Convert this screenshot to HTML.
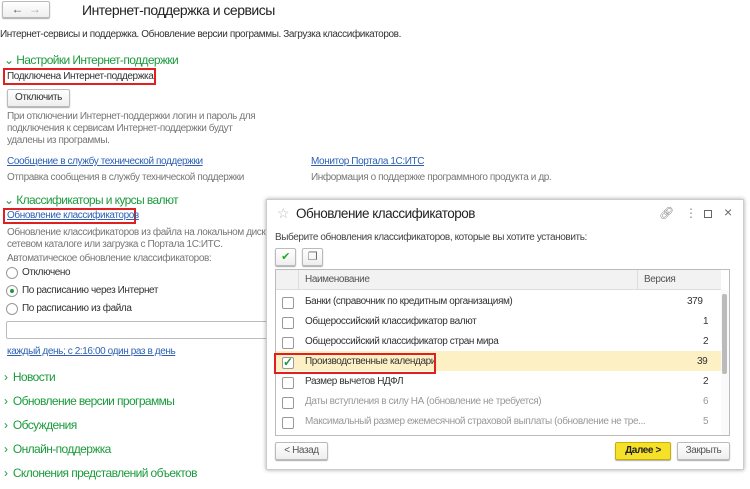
<!DOCTYPE html>
<html><head><meta charset="utf-8"><style>
*{margin:0;padding:0;box-sizing:border-box}
body{width:750px;height:489px;overflow:hidden;background:#fff;font-family:"Liberation Sans",sans-serif;font-size:10px;letter-spacing:-0.4px;color:#333;position:relative}
.a{position:absolute;white-space:nowrap}
.g{color:#777}
.sec{color:#1a9b3c;font-size:12px;letter-spacing:-0.6px}
.lnk{color:#2d5fb5;text-decoration:underline}
.red{border:2px solid #e02020}
.btn{border:1px solid #bbb;border-radius:2px;background:linear-gradient(#fff,#eee);box-shadow:0 1px 1px #aaa;text-align:center}
.rad{width:12px;height:12px;border:1px solid #999;border-radius:50%;background:#fff}
.cb{width:12px;height:12px;border:1px solid #999;background:#fff;border-radius:2px}
</style></head><body>
<div class="a btn" style="left:2px;top:1px;width:48px;height:17px;font-size:12px;line-height:15px;color:#555">←&nbsp;&nbsp;<span style="color:#aaa">→</span></div>
<div class="a" style="left:82px;top:2px;font-size:14px;letter-spacing:-0.5px;color:#222">Интернет-поддержка и сервисы</div>
<div class="a" style="left:0;top:29px">Интернет-сервисы и поддержка. Обновление версии программы. Загрузка классификаторов.</div>
<div class="a sec" style="left:4px;top:53px">⌄&nbsp;Настройки Интернет-поддержки</div>
<div class="a red" style="left:3px;top:68px;width:153px;height:17px"></div>
<div class="a" style="left:7px;top:71px">Подключена Интернет-поддержка</div>
<div class="a btn" style="left:7px;top:89px;width:63px;height:18px;line-height:16px">Отключить</div>
<div class="a g" style="left:7px;top:111px;line-height:12px">При отключении Интернет-поддержки логин и пароль для<br>подключения к сервисам Интернет-поддержки будут<br>удалены из программы.</div>
<div class="a lnk" style="left:7px;top:156px">Сообщение в службу технической поддержки</div>
<div class="a lnk" style="left:311px;top:156px">Монитор Портала 1С:ИТС</div>
<div class="a g" style="left:7px;top:172px">Отправка сообщения в службу технической поддержки</div>
<div class="a g" style="left:311px;top:172px">Информация о поддержке программного продукта и др.</div>
<div class="a sec" style="left:4px;top:193px">⌄&nbsp;Классификаторы и курсы валют</div>
<div class="a red" style="left:3px;top:208px;width:133px;height:16px"></div>
<div class="a lnk" style="left:7px;top:210px">Обновление классификаторов</div>
<div class="a g" style="left:7px;top:227px;line-height:12px">Обновление классификаторов из файла на локальном диске, в<br>сетевом каталоге или загрузка с Портала 1С:ИТС.</div>
<div class="a g" style="left:7px;top:253px">Автоматическое обновление классификаторов:</div>
<div class="a rad" style="left:6px;top:267px"></div><div class="a" style="left:22px;top:267px">Отключено</div>
<div class="a rad" style="left:6px;top:285px"><div style="width:4px;height:4px;background:#1a9b3c;border-radius:50%;margin:3px"></div></div><div class="a" style="left:22px;top:285px">По расписанию через Интернет</div>
<div class="a rad" style="left:6px;top:303px"></div><div class="a" style="left:22px;top:303px">По расписанию из файла</div>
<div class="a" style="left:6px;top:321px;width:262px;height:18px;border:1px solid #bbb;border-radius:2px"></div>
<div class="a lnk" style="left:7px;top:346px">каждый день; с 2:16:00 один раз в день</div>
<div class="a sec" style="left:4px;top:370px">›&nbsp; Новости</div>
<div class="a sec" style="left:4px;top:394px">›&nbsp; Обновление версии программы</div>
<div class="a sec" style="left:4px;top:418px">›&nbsp; Обсуждения</div>
<div class="a sec" style="left:4px;top:442px">›&nbsp; Онлайн-поддержка</div>
<div class="a sec" style="left:4px;top:466px">›&nbsp; Склонения представлений объектов</div>

<div class="a" style="left:266px;top:199px;width:478px;height:271px;background:#fff;border:1px solid #ccc;box-shadow:0 0 4px rgba(0,0,0,.35)">
<div class="a" style="left:10px;top:5px;color:#bbb;font-size:14px">☆</div>
<div class="a" style="left:29px;top:6px;font-size:13.5px;letter-spacing:-0.5px;color:#222">Обновление классификаторов</div>
<div class="a" style="left:392px;top:6px;color:#888;font-size:12px">🔗︎</div>
<div class="a" style="left:418px;top:6px;color:#888;font-size:12px">⋮</div>
<div class="a" style="left:437px;top:10px;width:8px;height:8px;border:1px solid #666"></div>
<div class="a" style="left:457px;top:4px;color:#666;font-size:14px">×</div>
<div class="a" style="left:8px;top:32px;color:#444">Выберите обновления классификаторов, которые вы хотите установить:</div>
<div class="a btn" style="left:8px;top:48px;width:21px;height:18px;color:#2a2;font-size:11px;line-height:16px">✔</div>
<div class="a btn" style="left:35px;top:48px;width:21px;height:18px;color:#666;font-size:11px;line-height:16px">❐</div>
<div class="a" style="left:8px;top:69px;width:455px;height:167px;border:1px solid #bbb;overflow:hidden">
 <div class="a" style="left:0;top:0;width:445px;height:20px;background:#f2f2f2;border-bottom:1px solid #ddd"></div>
 <div class="a" style="left:22px;top:0;width:1px;height:20px;background:#ddd"></div>
 <div class="a" style="left:361px;top:0;width:1px;height:20px;background:#ddd"></div>
 <div class="a" style="left:29px;top:4px;color:#555">Наименование</div>
 <div class="a" style="left:368px;top:4px;color:#555">Версия</div>
 <div class="a" style="left:0;top:81px;width:445px;height:20px;background:#fdf0c4"></div>
 <div class="a" style="left:445px;top:20px;width:8px;height:145px;background:#fafafa"></div>
 <div class="a" style="left:446px;top:24px;width:5px;height:80px;background:#bbb;border-radius:2px"></div>
</div>
<div class="a" style="left:8px;top:91px;width:0;height:0">
 <div class="a cb" style="left:7px;top:6px"></div><div class="a" style="left:30px;top:5px">Банки (справочник по кредитным организациям)</div><div class="a" style="left:412px;top:5px">379</div>
 <div class="a cb" style="left:7px;top:26px"></div><div class="a" style="left:30px;top:25px">Общероссийский классификатор валют</div><div class="a" style="left:428px;top:25px">1</div>
 <div class="a cb" style="left:7px;top:46px"></div><div class="a" style="left:30px;top:45px">Общероссийский классификатор стран мира</div><div class="a" style="left:428px;top:45px">2</div>
 <div class="a cb" style="left:7px;top:66px;color:#1a9b3c;font-size:12px;line-height:9px;font-weight:bold">✓</div><div class="a" style="left:30px;top:65px">Производственные календари</div><div class="a" style="left:422px;top:65px">39</div>
 <div class="a red" style="left:-1px;top:62px;width:162px;height:21px"></div>
 <div class="a cb" style="left:7px;top:86px"></div><div class="a" style="left:30px;top:85px">Размер вычетов НДФЛ</div><div class="a" style="left:428px;top:85px">2</div>
 <div class="a cb" style="left:7px;top:106px"></div><div class="a g" style="left:30px;top:105px;color:#999">Даты вступления в силу НА (обновление не требуется)</div><div class="a" style="left:428px;top:105px;color:#999">6</div>
 <div class="a cb" style="left:7px;top:126px"></div><div class="a" style="left:30px;top:125px;color:#999">Максимальный размер ежемесячной страховой выплаты (обновление не тре...</div><div class="a" style="left:428px;top:125px;color:#999">5</div>
</div>
<div class="a btn" style="left:8px;top:242px;width:53px;height:18px;line-height:16px;color:#555">&lt; Назад</div>
<div class="a btn" style="left:348px;top:242px;width:56px;height:18px;line-height:16px;background:#f5e12a;border-color:#c9b000;font-weight:bold;color:#222">Далее &gt;</div>
<div class="a btn" style="left:410px;top:242px;width:53px;height:18px;line-height:16px;color:#555">Закрыть</div>
</div>
</body></html>
